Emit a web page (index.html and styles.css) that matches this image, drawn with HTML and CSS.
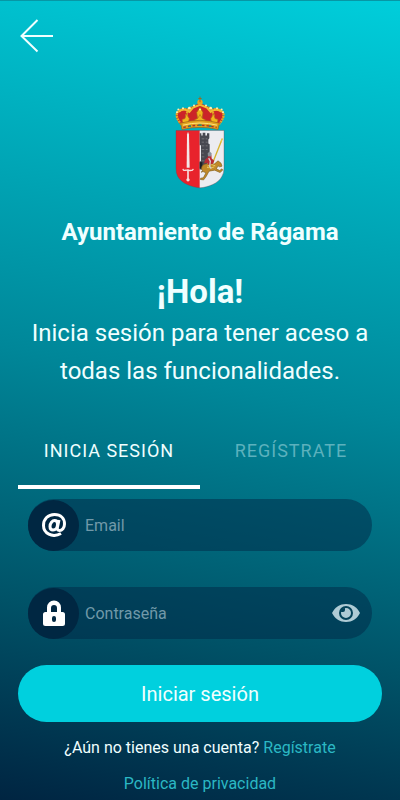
FILE: index.html
```html
<!DOCTYPE html>
<html lang="es">
<head>
  <meta charset="UTF-8">
  <meta name="viewport" content="width=device-width, initial-scale=1">
  <title>Ayuntamiento de Rágama</title>
  <link rel="stylesheet" href="styles.css">
</head>
<body>
  <header>
    <button class="back" type="button" aria-label="Volver">
      <svg width="34" height="34" viewBox="0 0 34 34"><path d="M17.500 1 1.500 17l16 15.500M2 17h31" /></svg>
    </button>
  </header>

  <main>
    <!-- escudo -->
    <svg class="crest" viewBox="46 36 150 278" role="img" aria-label="Escudo de Rágama">
      <path d="M49 139H122V311C97 309 65 298 54 276Q49 266 49 252Z" fill="#e8232c" />
      <path d="M120 139H193V252Q193 266 187 276C177 298 145 309 120 311Z" fill="#ececf0" />
      <!-- torre -->
      <path d="M120 147h5v7h4v-8h8v8h5v-7h7v15l-3 4v12l4 2v38l-8 8v25l-12 5h-10v-25h4v-48h-4Z" fill="#474850" />
      <path d="M126 164h8m4 0h5m-17 10h7m5 0h6m-18 11h8m4 0h6m-18 11h8m4 0h6m-18 11h6m-6 11h8m-8 12h9" stroke="#85858a" stroke-width="2" fill="none" />
      <path d="M120 234h8v19h-8z" fill="#1d2026" />
      <!-- jinete -->
      <path d="M188 163 158 239" stroke="#d6b22d" stroke-width="4" />
      <path d="m188 162-6 11 3 3Z" fill="#f0cf4e" />
      <path d="M130 260c-7-3-5-15 3-19 8-5 22 1 32-2l10-9 9 7 3 9-7 2-5-3-5 9 10 5 7-5 2 4-8 7-16-7-17 3-8 15-8 11-10-1 1-4 8-1 8-15-9-4-6 2Z" fill="#c28a28" stroke="#84601f" stroke-width="2" />
      <path d="m143 246 13-5 11 4m-25 5 13 1 9-3" stroke="#ebc65e" stroke-width="3" fill="none" />
      <path d="m137 225 7-5 3-11 8 2 1 12 8 7-4 9-13 3-6-6-8 2Z" fill="#b82a35" />
      <path d="m144 207 6-5 6 5-2 10-9-1Z" fill="#8b929a" />
      <path d="m147 222 5 9-2 16 5 6" stroke="#ced0cf" stroke-width="4" fill="none" />
      <!-- espada -->
      <path d="M81 251 82 151 85 143 88 151 90 251Z" fill="#f4e7e7" />
      <path d="M70 254c1 8 7 3 14 4s15 4 17-4" stroke="#f7dddd" stroke-width="4" fill="none" />
      <path d="M85 256v30" stroke="#f7dddd" stroke-width="5" />
      <circle cx="85" cy="287" r="5" fill="#f7dddd" />
      <path d="M49 139H193V252Q193 266 187 276C177 298 145 309 121 311C97 309 65 298 54 276Q49 266 49 252Z" fill="none" stroke="#7b3a43" stroke-width="1" />
      <!-- corona -->
      <path d="M65 124C51 112 44 91 54 81c11-12 26-9 34-5 8-10 23-17 33-17s26 8 33 17c11-6 26-5 34 6 9 12-1 31-12 42Z" fill="#cc2428" />
      <path d="M66 121C52 107 47 91 55 83c8-9 23-10 34-5M177 121c13-14 19-29 11-38-9-10-24-9-35-4M90 118C75 98 80 79 96 68M151 118c16-20 12-38-5-50" fill="none" stroke="#e6a824" stroke-width="7" stroke-dasharray="6 2" />
      <path d="M58 83c8-9 21-8 31 0l11-13 21-8 21 8 11 13c9-8 23-9 33 0" fill="none" stroke="#f0bc32" stroke-width="6" />
      <path d="m121 69 9 16-4 28h-11l-4-28Z" fill="#f0b51d" stroke="#a75c17" stroke-width="2" />
      <path d="m80 89 9 15-6 17-14-6-2-9 9-3ZM162 89l-9 15 6 17 14-6 2-9-9-3ZM121 91l7 12 9 4-7 12h-18l-7-12 9-4Z" fill="#f3b51d" stroke="#b4691a" stroke-width="2" />
      <path d="M63 117q58-17 116 0l-4 19q-54-13-108 0Z" fill="#e2a31f" stroke="#996018" stroke-width="2" />
      <path d="M70 123q51-13 102 0" fill="none" stroke="#ffe37a" stroke-width="3" />
      <path d="M71 130q50-13 100 0" fill="none" stroke="#ad3029" stroke-width="4" stroke-dasharray="8 6" />
      <path d="M87 126h7m22-3h10m22 3h7" stroke="#308b6d" stroke-width="5" />
      <circle cx="121" cy="54" r="8" fill="#e8a622" />
      <path d="M121 37v17m-5-11h10" stroke="#936d25" stroke-width="3" />
      <g fill="#fff3b1"><circle cx="52" cy="84" r="3" /><circle cx="56" cy="76" r="3" /><circle cx="70" cy="72" r="3" /><circle cx="89" cy="72" r="4" /><circle cx="103" cy="64" r="3" /><circle cx="139" cy="64" r="3" /><circle cx="153" cy="72" r="4" /><circle cx="172" cy="72" r="3" /><circle cx="186" cy="76" r="3" /><circle cx="190" cy="84" r="3" /><circle cx="121" cy="76" r="3" /></g>
    </svg>

    <h1>Ayuntamiento de Rágama</h1>
    <h2>¡Hola!</h2>
    <p class="intro">Inicia sesión para tener aceso a todas las funcionalidades.</p>

    <nav class="tabs">
      <button class="tab active" type="button">INICIA SESIÓN</button>
      <button class="tab" type="button">REGÍSTRATE</button>
    </nav>

    <form>
      <div class="field">
        <label for="email" aria-label="Email">
          <svg width="24" height="24" viewBox="0 0 24 24"><path class="at" d="M19 20.500C10 25.500 1.500 20 1.500 12.500 1.500 6 6 1.500 12.500 1.500S22.500 5.500 22.500 11c0 4-2.500 6.500-5 6.500-2 0-2.500-1.500-2-3.500L17 7M15.500 11c0-2-1-3.500-3-3.500S8 10 8 13.500c0 2 1 3.500 3 3.500 2.500 0 4.500-2.500 4.500-6Z" /></svg>
        </label>
        <input id="email" type="email" placeholder="Email">
      </div>
      <div class="field">
        <label for="password" aria-label="Contraseña">
          <svg width="24" height="26" viewBox="0 0 24 26"><path d="M5 12V7.500a7 7 0 0 1 14 0V12h1.500Q23 12 23 14.500v9Q23 26 20.500 26h-17Q1 26 1 23.500v-9Q1 12 3.500 12Zm4 0h6V8a3 3 0 0 0-6 0Zm3 4a2 2 0 0 0-2 2v2a2 2 0 0 0 4 0v-2a2 2 0 0 0-2-2Z" fill="#fff" fill-rule="evenodd" /></svg>
        </label>
        <input id="password" type="password" placeholder="Contraseña">
        <button class="eye" type="button" aria-label="Mostrar contraseña">
          <svg width="28" height="20" viewBox="0 0 28 20"><path d="M0 10C3 4 8 1 14 1s11 3 14 9c-3 6-8 9-14 9S3 16 0 10Z" fill="#aecbd5" /><circle cx="14" cy="10" r="6" fill="#aecbd5" stroke="#034259" stroke-width="2" /><path d="M13 5v2q0 2-2 2H9q0-4 4-4Z" fill="#034259" /></svg>
        </button>
      </div>
      <button class="submit" type="submit">Iniciar sesión</button>
    </form>
  </main>

  <footer>
    <p>¿Aún no tienes una cuenta? <a href="#registro">Regístrate</a></p>
    <p><a href="#privacidad">Política de privacidad</a></p>
  </footer>
</body>
</html>
```
FILE: styles.css
```css
* {
  box-sizing: border-box;
}

body {
  margin: 0;
  min-height: 100vh;
  padding: 0 18px;
  border-top: 1px solid #0797a5;
  font-family: Roboto, sans-serif;
  color: #f0ffff;
  background: linear-gradient(191deg, #00cedb 0%, #008799 48%, #005267 77%, #002441 100%);
}

button {
  padding: 0;
  border: none;
  background: none;
  font-family: inherit;
  color: inherit;
  cursor: pointer;
}

svg {
  display: block;
}

a {
  color: #2bb8c4;
  text-decoration: none;
}

header {
  padding: 18px 2px 0;
}

.back path {
  fill: none;
  stroke: #f0ffff;
  stroke-width: 2;
}

main {
  text-align: center;
}

.crest {
  width: 50px;
  height: 93px;
  margin: 39px auto 25px;
}

h1, h2, p {
  margin: 0;
}

h1 {
  font-size: 24px;
  line-height: 36px;
}

h2 {
  margin-top: 20px;
  font-size: 33px;
  line-height: 44px;
}

.intro {
  font-size: 24px;
  line-height: 38px;
}

.tabs {
  display: flex;
  margin-top: 24px;
}

.tab {
  flex: 1;
  height: 75px;
  padding-top: 2px;
  border-bottom: 4px solid transparent;
  font-size: 18px;
  letter-spacing: 1px;
  color: #5cb1bd;
}

.tab.active {
  color: #f0ffff;
  border-color: #fff;
}

form {
  padding-top: 10px;
}

.field {
  display: flex;
  align-items: center;
  height: 52px;
  margin: 0 10px 36px;
  border-radius: 26px;
  background: rgba(0, 39, 69, 0.5);
}

.field label {
  display: flex;
  align-items: center;
  justify-content: center;
  width: 51px;
  height: 51px;
  border-radius: 50%;
  background: #002742;
}

.at {
  fill: none;
  stroke: #fff;
  stroke-width: 3;
}

.field input {
  flex: 1;
  min-width: 0;
  height: 100%;
  padding: 0 6px;
  border: none;
  outline: none;
  background: none;
  font: 16px Roboto, sans-serif;
  color: #fff;
}

.field input::placeholder {
  color: #7199a9;
}

.eye {
  margin-right: 12px;
}

.submit {
  width: 100%;
  height: 57px;
  margin-top: -10px;
  border-radius: 29px;
  background: #00d0de;
  font-size: 20px;
}

footer {
  padding-top: 8px;
  font-size: 16px;
  line-height: 36px;
  text-align: center;
}
```
